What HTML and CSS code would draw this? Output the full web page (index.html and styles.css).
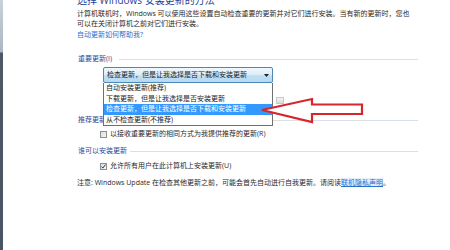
FILE: index.html
```html
<!DOCTYPE html>
<html lang="zh-CN">
<head>
<meta charset="utf-8">
<title>Windows Update 设置</title>
<link rel="stylesheet" href="styles.css">
</head>
<body>
<div class="page">
  <div class="strip"></div>
  <div class="content">
    <h1 class="title">选择 Windows 安装更新的方法</h1>
    <p class="intro">计算机联机时，Windows 可以使用这些设置自动检查重要的更新并对它们进行安装。当有新的更新时，您也<br>可以在关闭计算机之前对它们进行安装。</p>
    <a class="help">自动更新如何帮助我?</a>

    <div class="group-head head-important"><span class="label">重要更新(I)</span><i class="rule"></i></div>
    <div class="combo-wrap">
      <div class="combo">
        <span class="combo-text">检查更新，但是让我选择是否下载和安装更新</span>
        <svg class="combo-arrow" width="5" height="3" viewBox="0 0 5 3"><path d="M0 0H5L2.5 3Z" fill="#222"/></svg>
      </div>
      <ul class="menu">
        <li>自动安装更新(推荐)</li>
        <li>下载更新，但是让我选择是否安装更新</li>
        <li class="active">检查更新，但是让我选择是否下载和安装更新</li>
        <li>从不检查更新(不推荐)</li>
      </ul>
    </div>
    <div class="time-row"><span class="spin"></span></div>

    <div class="group-head head-rec"><span class="label">推荐更新</span><i class="rule"></i></div>
    <div class="check-row row-rec"><span class="box"></span><span>以接收重要更新的相同方式为我提供推荐的更新(R)</span></div>

    <div class="group-head head-who"><span class="label">谁可以安装更新</span><i class="rule"></i></div>
    <div class="check-row row-who"><span class="box checked"><svg width="5" height="5" viewBox="0 0 5 5"><path d="M0.6 2.6L1.9 4.1L4.4 0.6" fill="none" stroke="#2b3a6b" stroke-width="1"/></svg></span><span>允许所有用户在此计算机上安装更新(U)</span></div>

    <p class="note">注意: Windows Update 在检查其他更新之前，可能会首先自动进行自我更新。请阅读<a class="privacy">联机隐私声明</a>。</p>
  </div>
  <svg class="red-arrow" width="110" height="30" viewBox="0 0 110 30">
    <polygon points="4,14 54,3 54,8.5 104,8.5 104,18 54,18 54,26" fill="#fff" stroke="#d4262c" stroke-width="2.2" stroke-linejoin="miter"/>
  </svg>
</div>
</body>
</html>
```

FILE: styles.css
```css
* { box-sizing: border-box; }
html, body { margin: 0; padding: 0; background: #fff; }
body {
  font-family: "Open Sans", "Noto Sans CJK SC", sans-serif;
  font-size: 7px;
  color: #2a2a2a;
  overflow: hidden;
}
.page {
  position: relative;
  display: flex;
  width: 450px;
  height: 250px;
  overflow: hidden;
}
.strip {
  width: 3px;
  flex: none;
  background: linear-gradient(#c9d2dc 0, #aab6c3 52px, #4d5865 53px, #4a5563 100%);
}
.content {
  flex: 1;
  padding-left: 74px;
  padding-right: 32px;
}
.title {
  margin: -6px 0 0;
  font-size: 10px;
  line-height: 12px;
  font-weight: normal;
  color: #1f3f99;
  white-space: nowrap;
}
.intro {
  margin: 3px 0 0;
  line-height: 10px;
  white-space: nowrap;
}
.help {
  display: block;
  margin-top: 1px;
  line-height: 10px;
  color: #2a6fcc;
}
.group-head {
  display: flex;
  align-items: center;
  line-height: 10px;
  color: #2b4c9c;
  padding-left: 1px;
}
.group-head .label { flex: none; padding-right: 3px; }
.group-head .rule {
  flex: 1;
  height: 1px;
  background: #d9e1e6;
  margin-top: 1px;
}
.head-important { margin-top: 14px; }
.head-important .rule { margin-left: 4px; }
.combo-wrap {
  position: relative;
  margin: 3px 0 0 26px;
  width: 170px;
}
.combo {
  display: flex;
  align-items: center;
  justify-content: space-between;
  height: 16px;
  padding: 0 3px 0 3px;
  border: 1px solid #4b87b7;
  border-radius: 2px;
  background: linear-gradient(#eef7fd 0, #dcedf9 50%, #c2e0f5 51%, #b6d9f2 100%);
}
.combo-text { line-height: 10px; color: #1c1c1c; }
.combo-arrow { flex: none; }
.menu {
  position: absolute;
  top: 16px;
  left: 0;
  width: 170px;
  margin: 0;
  padding: 0;
  list-style: none;
  background: #fff;
  border: 1px solid #707070;
  border-top: none;
  z-index: 2;
}
.menu li {
  height: 10.5px;
  line-height: 10.5px;
  padding-left: 2px;
  color: #1c1c1c;
  white-space: nowrap;
}
.menu li.active { background: #3399ff; color: #fff; }
.time-row {
  display: flex;
  margin-top: 14px;
  height: 7px;
  padding-left: 199px;
}
.spin {
  width: 8px;
  height: 7px;
  border: 1px solid #c8c8c8;
  background: linear-gradient(#f4f4f4, #dcdcdc);
}
.head-rec { margin-top: 11px; }
.head-rec .rule { margin-left: 0; }
.check-row {
  display: flex;
  align-items: center;
  gap: 3px;
  padding-left: 23px;
  line-height: 10px;
  white-space: nowrap;
}
.row-rec { margin-top: 4px; }
.box {
  width: 7px;
  height: 7px;
  flex: none;
  border: 1px solid #8e8f8f;
  background: linear-gradient(135deg, #dcdcdc, #f6f6f6);
  display: flex;
  align-items: center;
  justify-content: center;
}
.head-who { margin-top: 7px; }
.head-who .rule { margin-left: 0; }
.row-who { margin-top: 5px; }
.note {
  margin: 7px 0 0;
  line-height: 10px;
  white-space: nowrap;
}
.privacy {
  color: #2a6fcc;
  text-decoration: underline;
  background: #e3eefb;
}
.red-arrow {
  position: absolute;
  left: 258px;
  top: 96px;
  z-index: 3;
}
```
